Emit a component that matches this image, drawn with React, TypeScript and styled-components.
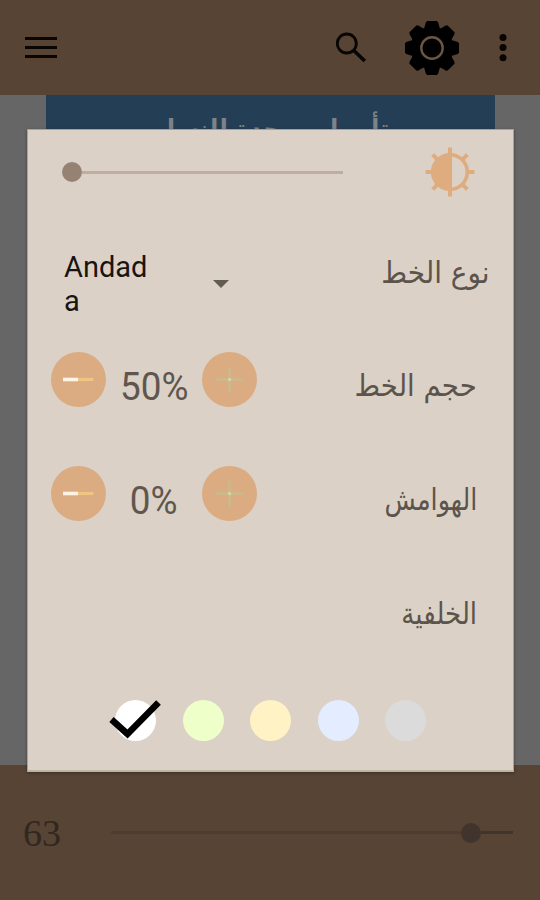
import React from "react";
import styled, { createGlobalStyle } from "styled-components";

const GlobalStyle = createGlobalStyle`
  *, *::before, *::after { box-sizing: border-box; }
  html, body { margin: 0; padding: 0; }
  body { font-family: Roboto, sans-serif; background: #666666; overflow: hidden; }
  svg { display: block; }
`;

const Screen = styled.div`
  position: relative;
  width: 540px;
  height: 900px;
  display: flex;
  flex-direction: column;
  background: #666666;
  overflow: hidden;
`;

const Toolbar = styled.header`
  height: 95px;
  flex: none;
  display: flex;
  align-items: center;
  padding-left: 25px;
  background: #574435;
`;

const IconSlot = styled.span<{ $width: number; $gap?: number; $push?: boolean }>`
  width: ${(p) => p.$width}px;
  flex: none;
  margin-left: ${(p) => (p.$push ? "auto" : `${p.$gap ?? 0}px`)};
`;

const Page = styled.main`
  flex: 1;
  display: flex;
  justify-content: center;
`;

const Banner = styled.div`
  width: 449px;
  height: 90px;
  padding: 13px 106px 0 0;
  background: #243e56;
  color: #7d8388;
  font: bold 28px/44px "DejaVu Sans", sans-serif;
  white-space: nowrap;
`;

const BannerText = styled.div`
  transform: scaleX(0.84);
  transform-origin: right center;
`;

const Footer = styled.footer`
  height: 135px;
  flex: none;
  display: flex;
  align-items: center;
  padding: 0 27px 0 23px;
  background: #574435;
`;

const PageNumber = styled.span`
  width: 88px;
  color: #32271f;
  font: 38px/44px "Liberation Serif", serif;
`;

const Track = styled.div<{ $width: number; $color: string; $thickness: number }>`
  width: ${(p) => p.$width}px;
  height: ${(p) => p.$thickness}px;
  background: ${(p) => p.$color};
`;

const Thumb = styled.div<{ $color: string }>`
  width: 20px;
  height: 20px;
  flex: none;
  border-radius: 50%;
  background: ${(p) => p.$color};
`;

const Dialog = styled.section`
  position: absolute;
  left: 27px;
  top: 129px;
  width: 487px;
  height: 643px;
  display: grid;
  grid-template-rows: 84px 108px 114px 114px 113px 1fr;
  background: #dbd1c6;
  border: 1px solid #aaa298;
  border-bottom: 2px solid #bdb5a4;
  box-shadow: 0 1px 3px rgba(0, 0, 0, 0.35);
`;

const Row = styled.div<{ $end?: number }>`
  display: flex;
  align-items: center;
  padding: 0 ${(p) => p.$end ?? 36}px 0 23px;
`;

const BrightnessRow = styled(Row)`
  padding: 0 38px 0 34px;
`;

const SunSlot = styled.span`
  margin-left: auto;
`;

const Label = styled.span<{ $scale: number; $lift?: number }>`
  margin-left: auto;
  padding-top: ${(p) => p.$lift ?? 0}px;
  color: #5c544b;
  font: 30px/40px "DejaVu Sans", sans-serif;
  white-space: nowrap;
  transform: scaleX(${(p) => p.$scale});
  transform-origin: right center;
`;

const FontSelect = styled.div`
  width: 202px;
  margin: 32px 0 0 13px;
  display: flex;
  align-items: center;
`;

const FontName = styled.span`
  width: 88px;
  color: #171411;
  font: 29px/34px Roboto, sans-serif;
  overflow-wrap: anywhere;
`;

const Caret = styled.i`
  margin-left: 61px;
  border: 8px solid transparent;
  border-top-color: #615c4e;
  border-bottom: 0;
`;

const Stepper = styled.div`
  width: 206px;
  display: flex;
  align-items: center;
  justify-content: space-between;
`;

const RoundButton = styled.button`
  width: 55px;
  height: 55px;
  padding: 0;
  border: 0;
  border-radius: 50%;
  background: #dbab82;
`;

const Value = styled.span`
  padding-top: 16px;
  color: #5f574f;
  font: 38px/44px Roboto, sans-serif;
  transform: scaleX(0.97);
`;

const Swatches = styled.div`
  display: flex;
  padding: 37px 0 0 87px;
  gap: 26.5px;
`;

const Swatch = styled.div<{ $color: string }>`
  width: 41px;
  height: 41px;
  border-radius: 50%;
  background: ${(p) => p.$color};
`;

const CheckMark = styled.svg`
  margin: -1px 0 0 -6px;
  overflow: visible;
`;

const MinusIcon = () => (
  <svg width="55" height="55">
    <path d="M12 27.5H27" stroke="#fff3e5" strokeWidth="3.6" />
    <path d="M27 27.5H42.5" stroke="#efc581" strokeWidth="3.2" />
  </svg>
);

const PlusIcon = () => (
  <svg width="55" height="55">
    <path d="M14 27.5H41.5M27.5 15V41" stroke="#c8bb8d" strokeWidth="2.4" />
    <circle cx="27.5" cy="27.5" r="1.6" fill="#ddd5a9" />
  </svg>
);

const GearIcon = () => (
  <svg width="54" height="54" viewBox="-27 -27 54 54">
    <circle r="21.5" fill="#000" />
    {[0, 45, 90, 135, 180, 225, 270, 315].map((a) => (
      <path key={a} d="M-8 -19L-6.3 -25Q-5.8 -27 -4.5 -27H4.5Q5.8 -27 6.3 -25L8 -19Z" transform={`rotate(${a})`} fill="#000" />
    ))}
    <circle r="10.7" fill="none" stroke="#6a5645" strokeWidth="2.4" />
  </svg>
);

const SunIcon = () => (
  <svg width="50" height="50" viewBox="-25 -25 50 50">
    <circle r="17.3" fill="none" stroke="#dfac80" strokeWidth="3.6" />
    <path d="M2 -18.5H0A18.5 18.5 0 0 0 0 18.5H2Z" fill="#dfac80" />
    {[0, 45, 90, 135, 180, 225, 270, 315].map((a) => (
      <path key={a} d="M0 -24.5V-17" transform={`rotate(${a})`} stroke="#dfac80" strokeWidth="4" />
    ))}
  </svg>
);

const rows = [
  { label: "حجم الخط", value: "50%", scale: 0.92 },
  { label: "الهوامش", value: "0%", scale: 0.85 },
];

const colors = ["#ffffff", "#efffca", "#fff2c4", "#e4edff", "#dbdbdb"];

export default function App() {
  return (
    <>
      <GlobalStyle />
      <Screen>
        <Toolbar>
          <IconSlot $width={32}>
            <svg width="32" height="24">
              <path d="M0 2.5H32M0 11.5H32M0 20.5H32" stroke="#080503" strokeWidth="3" />
            </svg>
          </IconSlot>
          <IconSlot $width={32} $push>
            <svg width="32" height="32">
              <circle cx="10.8" cy="11.5" r="9.5" fill="none" stroke="#080503" strokeWidth="2.8" />
              <path d="M17.8 18.5L28.8 29" stroke="#080503" strokeWidth="3.7" />
            </svg>
          </IconSlot>
          <IconSlot $width={54} $gap={37}>
            <GearIcon />
          </IconSlot>
          <IconSlot $width={81} $gap={0}>
            <svg width="81" height="30">
              <g fill="#080503">
                <circle cx="44" cy="4.5" r="3.5" />
                <circle cx="44" cy="14.5" r="3.5" />
                <circle cx="44" cy="24.8" r="3.5" />
              </g>
            </svg>
          </IconSlot>
        </Toolbar>
        <Page>
          <Banner dir="rtl">
            <BannerText>تأصيل موحدة للنسا</BannerText>
          </Banner>
        </Page>
        <Footer>
          <PageNumber>63</PageNumber>
          <Track $width={350} $color="#4d3c2f" $thickness={3} />
          <Thumb $color="#41342c" />
          <Track $width={32} $color="#41342c" $thickness={3} />
        </Footer>

        <Dialog>
          <BrightnessRow>
            <Thumb $color="#968273" />
            <Track $width={261} $color="#bdaea1" $thickness={3} />
            <SunSlot>
              <SunIcon />
            </SunSlot>
          </BrightnessRow>
          <Row $end={23}>
            <FontSelect>
              <FontName>Andada</FontName>
              <Caret />
            </FontSelect>
            <Label dir="rtl" $scale={0.93} $lift={9}>نوع الخط</Label>
          </Row>
          {rows.map((row) => (
            <Row key={row.label}>
              <Stepper>
                <RoundButton aria-label="−"><MinusIcon /></RoundButton>
                <Value>{row.value}</Value>
                <RoundButton aria-label="+"><PlusIcon /></RoundButton>
              </Stepper>
              <Label dir="rtl" $scale={row.scale} $lift={14}>{row.label}</Label>
            </Row>
          ))}
          <Row>
            <Label dir="rtl" $scale={0.87} $lift={14}>الخلفية</Label>
          </Row>
          <Swatches>
            {colors.map((color, i) => (
              <Swatch key={color} $color={color}>
                {i === 0 && (
                  <CheckMark width="52" height="42">
                    <path d="M2.5 20.5L18.5 35L49.5 3.5" fill="none" stroke="#000" strokeWidth="6.5" />
                  </CheckMark>
                )}
              </Swatch>
            ))}
          </Swatches>
        </Dialog>
      </Screen>
    </>
  );
}
